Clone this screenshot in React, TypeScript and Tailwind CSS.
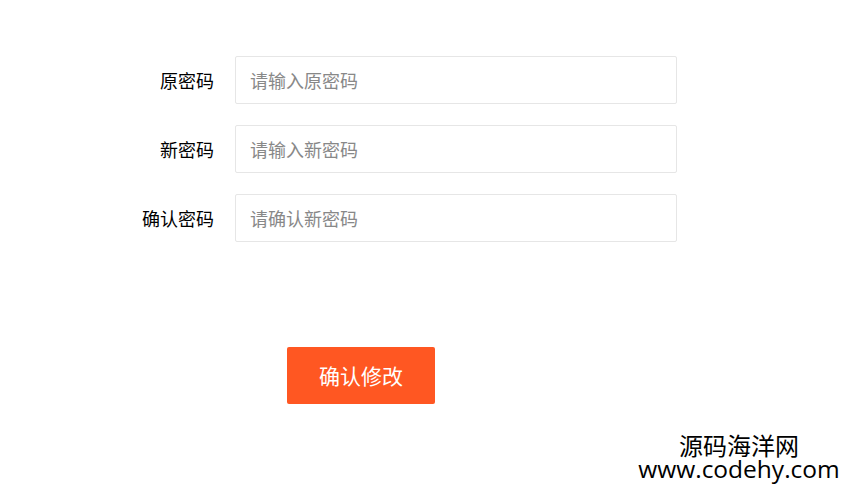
import React from "react";

const fields = [
  { label: "原密码", ph: "请输入原密码" },
  { label: "新密码", ph: "请输入新密码" },
  { label: "确认密码", ph: "请确认新密码" },
];

export default function App() {
  return (
    <div
      className="relative w-[843px] h-[491px] bg-white overflow-hidden"
      style={{ fontFamily: '"Noto Sans CJK SC", "Noto Sans", sans-serif' }}
    >
      <div className="pt-[56px] flex flex-col gap-[21px]">
        {fields.map((f) => (
          <div key={f.label} className="flex items-center gap-[21px]">
            <div className="w-[214px] text-right text-[18px] text-black leading-none">{f.label}</div>
            <div className="w-[442px] h-[48px] border border-[#e6e6e6] rounded-[2px] flex items-center pl-[14px] text-[18px] text-[#888] leading-none">
              {f.ph}
            </div>
          </div>
        ))}
      </div>
      <div className="pl-[287px] pt-[105px]">
        <button className="w-[148px] h-[57px] bg-[#ff5722] rounded-[2px] text-white text-[21px] leading-none flex items-center justify-center">
          确认修改
        </button>
      </div>
      <div className="absolute left-[634px] top-[433px] w-[210px] flex flex-col items-center text-black">
        <div className="text-[24px] leading-[24px]">源码海洋网</div>
        <div
          className="text-[24.5px] leading-[23px]"
          style={{ fontFamily: '"Open Sans", "Noto Sans", sans-serif' }}
        >
          www.codehy.com
        </div>
      </div>
    </div>
  );
}
